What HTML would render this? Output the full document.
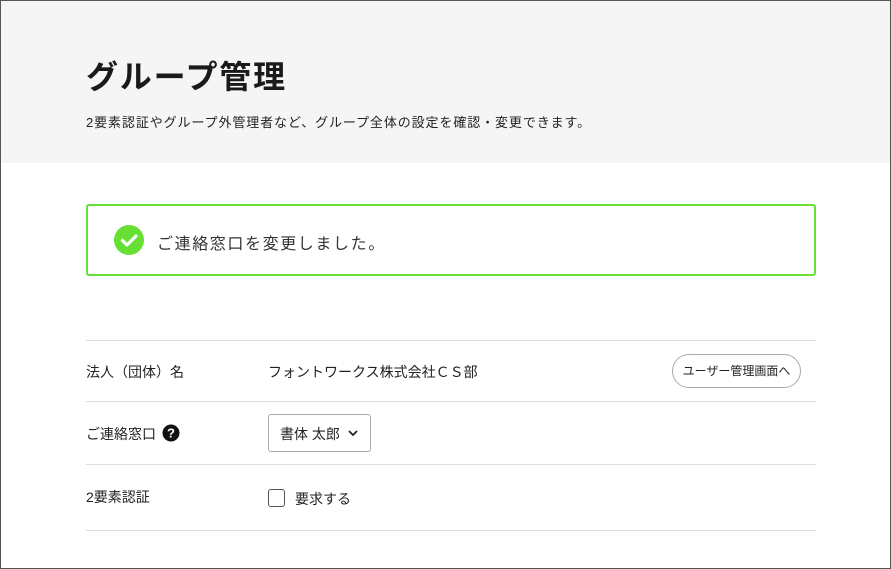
<!DOCTYPE html>
<html><head><meta charset="utf-8"><style>
*{margin:0;padding:0;box-sizing:border-box}
body{width:891px;height:569px;overflow:hidden;font-family:"Liberation Sans","Noto Sans CJK JP",sans-serif;color:#222;background:#fff}
.frame{position:absolute;left:0;top:0;width:891px;height:569px;border:1px solid #555}
.hdr{position:absolute;left:1px;top:1px;width:889px;height:162px;background:#f5f5f5}
.abs{position:absolute;white-space:nowrap}
.line{position:absolute;left:86px;width:730px;height:1px;background:#ddd}
</style></head><body>
<div class="hdr"></div>
<div class="abs" style="left:86px;top:52px;font-size:32px;font-weight:bold;color:#1a1a1a;letter-spacing:1.8px">グループ管理</div>
<div class="abs" style="left:86px;top:112px;font-size:13px;letter-spacing:0.9px">2要素認証やグループ外管理者など、グループ全体の設定を確認・変更できます。</div>
<div class="abs" style="left:86px;top:204px;width:730px;height:72px;border:2px solid #66e033;border-radius:3px"></div>
<svg class="abs" style="left:114px;top:225px" width="30" height="30" viewBox="0 0 30 30"><circle cx="15" cy="15" r="15" fill="#66e033"/><path d="M8.5 15.5l4.5 4.5 9-9" stroke="#fff" stroke-width="3.2" fill="none" stroke-linecap="round" stroke-linejoin="round"/></svg>
<div class="abs" style="left:157px;top:230px;font-size:16px;letter-spacing:1.6px;color:#333">ご連絡窓口を変更しました。</div>
<div class="line" style="top:340px"></div>
<div class="line" style="top:401px"></div>
<div class="line" style="top:464px"></div>
<div class="line" style="top:530px"></div>
<div class="abs" style="left:86px;top:362px;font-size:14px">法人（団体）名</div>
<div class="abs" style="left:268px;top:362px;font-size:14px">フォントワークス株式会社ＣＳ部</div>
<div class="abs" style="left:672px;top:354px;width:129px;height:34px;border:1px solid #aaa;border-radius:17px;font-size:12px;text-align:center;line-height:32px">ユーザー管理画面へ</div>
<div class="abs" style="left:86px;top:424px;font-size:14px">ご連絡窓口</div>
<svg class="abs" style="left:162px;top:424px" width="18" height="18" viewBox="0 0 18 18"><circle cx="9" cy="9" r="8.5" fill="#111"/><text x="9" y="13.5" font-size="13" font-weight="bold" fill="#fff" text-anchor="middle" font-family="Liberation Sans">?</text></svg>
<div class="abs" style="left:268px;top:414px;width:103px;height:38px;border:1px solid #aaa;border-radius:3px"></div>
<div class="abs" style="left:280px;top:424px;font-size:14px">書体 太郎</div>
<svg class="abs" style="left:347px;top:428px" width="12" height="10" viewBox="0 0 12 10"><path d="M2 3l4 4 4-4" stroke="#222" stroke-width="1.8" fill="none"/></svg>
<div class="abs" style="left:86px;top:487px;font-size:14px">2要素認証</div>
<div class="abs" style="left:268px;top:489px;width:17px;height:18px;border:1px solid #555;border-radius:3px"></div>
<div class="abs" style="left:295px;top:489px;font-size:14px">要求する</div>
<div class="frame"></div>
</body></html>
